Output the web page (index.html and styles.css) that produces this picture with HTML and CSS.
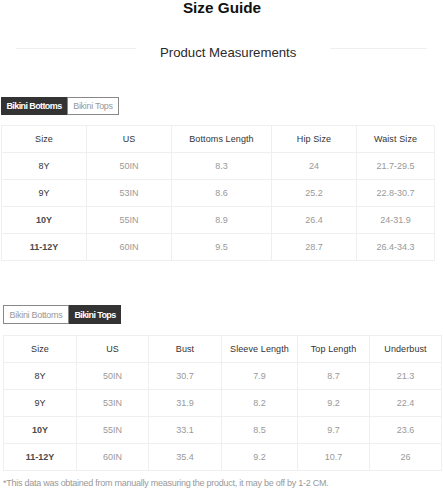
FILE: index.html
```html
<!DOCTYPE html>
<html>
<head>
<meta charset="utf-8">
<link rel="stylesheet" href="styles.css">
</head>
<body>
<h1 class="title">Size Guide</h1>
<div class="heading">
  <span class="rule rule-left"></span>
  <h2 class="heading-text">Product Measurements</h2>
  <span class="rule rule-right"></span>
</div>

<div class="tabs tabs-one">
  <span class="tab tab-active tab-w1">Bikini Bottoms</span>
  <span class="tab tab-w2">Bikini Tops</span>
</div>
<table class="grid grid-one">
  <colgroup>
    <col style="width:85px"><col style="width:85px"><col style="width:100px"><col style="width:85px"><col style="width:78px">
  </colgroup>
  <tr class="head"><th>Size</th><th>US</th><th>Bottoms Length</th><th>Hip Size</th><th>Waist Size</th></tr>
  <tr><td class="size">8Y</td><td>50IN</td><td>8.3</td><td>24</td><td>21.7-29.5</td></tr>
  <tr><td class="size">9Y</td><td>53IN</td><td>8.6</td><td>25.2</td><td>22.8-30.7</td></tr>
  <tr><td class="size strong">10Y</td><td>55IN</td><td>8.9</td><td>26.4</td><td>24-31.9</td></tr>
  <tr><td class="size strong">11-12Y</td><td>60IN</td><td>9.5</td><td>28.7</td><td>26.4-34.3</td></tr>
</table>

<div class="tabs tabs-two">
  <span class="tab tab-w1">Bikini Bottoms</span>
  <span class="tab tab-active tab-w2">Bikini Tops</span>
</div>
<table class="grid grid-two">
  <colgroup>
    <col style="width:73px"><col style="width:72px"><col style="width:73px"><col style="width:76px"><col style="width:72px"><col style="width:72px">
  </colgroup>
  <tr class="head"><th>Size</th><th>US</th><th>Bust</th><th>Sleeve Length</th><th>Top Length</th><th>Underbust</th></tr>
  <tr><td class="size">8Y</td><td>50IN</td><td>30.7</td><td>7.9</td><td>8.7</td><td>21.3</td></tr>
  <tr><td class="size">9Y</td><td>53IN</td><td>31.9</td><td>8.2</td><td>9.2</td><td>22.4</td></tr>
  <tr><td class="size strong">10Y</td><td>55IN</td><td>33.1</td><td>8.5</td><td>9.7</td><td>23.6</td></tr>
  <tr><td class="size strong">11-12Y</td><td>60IN</td><td>35.4</td><td>9.2</td><td>10.7</td><td>26</td></tr>
</table>

<p class="note">*This data was obtained from manually measuring the product, it may be off by 1-2 CM.</p>
</body>
</html>
```

FILE: styles.css
```css
* { box-sizing: border-box; }
html, body { margin: 0; padding: 0; background: #fff; }
body {
  font-family: "Liberation Sans", Arial, sans-serif;
  color: #333;
  width: 443px;
  height: 488px;
  overflow: hidden;
}
.title {
  margin: 0;
  font-size: 15.3px;
  line-height: 15px;
  font-weight: bold;
  text-align: center;
  color: #111;
  padding-left: 1px;
}
.heading {
  display: flex;
  align-items: flex-start;
  margin-top: 30px;
  padding-left: 16px;
  height: 16px;
}
.rule {
  display: block;
  height: 1px;
  background: #efefef;
  margin-top: 3px;
}
.rule-left { width: 120px; margin-right: 24px; }
.rule-right { width: 97px; margin-left: 34px; }
.heading-text {
  margin: 0;
  font-size: 13.2px;
  line-height: 16px;
  font-weight: normal;
  color: #2a2a2a;
  white-space: nowrap;
}
.tabs {
  display: flex;
  height: 18px;
}
.tabs-one { margin: 36px 0 10px 1px; }
.tabs-two { margin: 44px 0 11px 3px; height: 19px; }
.tab {
  display: flex;
  align-items: center;
  justify-content: center;
  font-size: 9px;
  letter-spacing: -0.3px;
  color: #999;
  border: 1px solid #888;
  background: #fff;
}
.tab-active {
  background: #333;
  border-color: #333;
  color: #fff;
  font-weight: bold;
  letter-spacing: -0.6px;
}
.tab-w1 { width: 66px; }
.tab-w2 { width: 52px; }
.grid {
  border-collapse: collapse;
  table-layout: fixed;
  font-size: 9px;
}
.grid-one { width: 433px; margin-left: 1px; }
.grid-two { width: 438px; margin-left: 3px; }
.grid th, .grid td {
  border: 1px solid #efefef;
  height: 27px;
  padding: 0;
  text-align: center;
  vertical-align: middle;
  font-weight: normal;
  color: #999;
}
.grid th { color: #333; letter-spacing: 0.1px; }
.grid td.size { color: #333; }
.grid td.strong { font-weight: bold; color: #4a4a4a; }
.note {
  margin: 7px 0 0 3px;
  font-size: 9px;
  line-height: 11px;
  color: #999;
  letter-spacing: -0.26px;
  white-space: nowrap;
}
```
